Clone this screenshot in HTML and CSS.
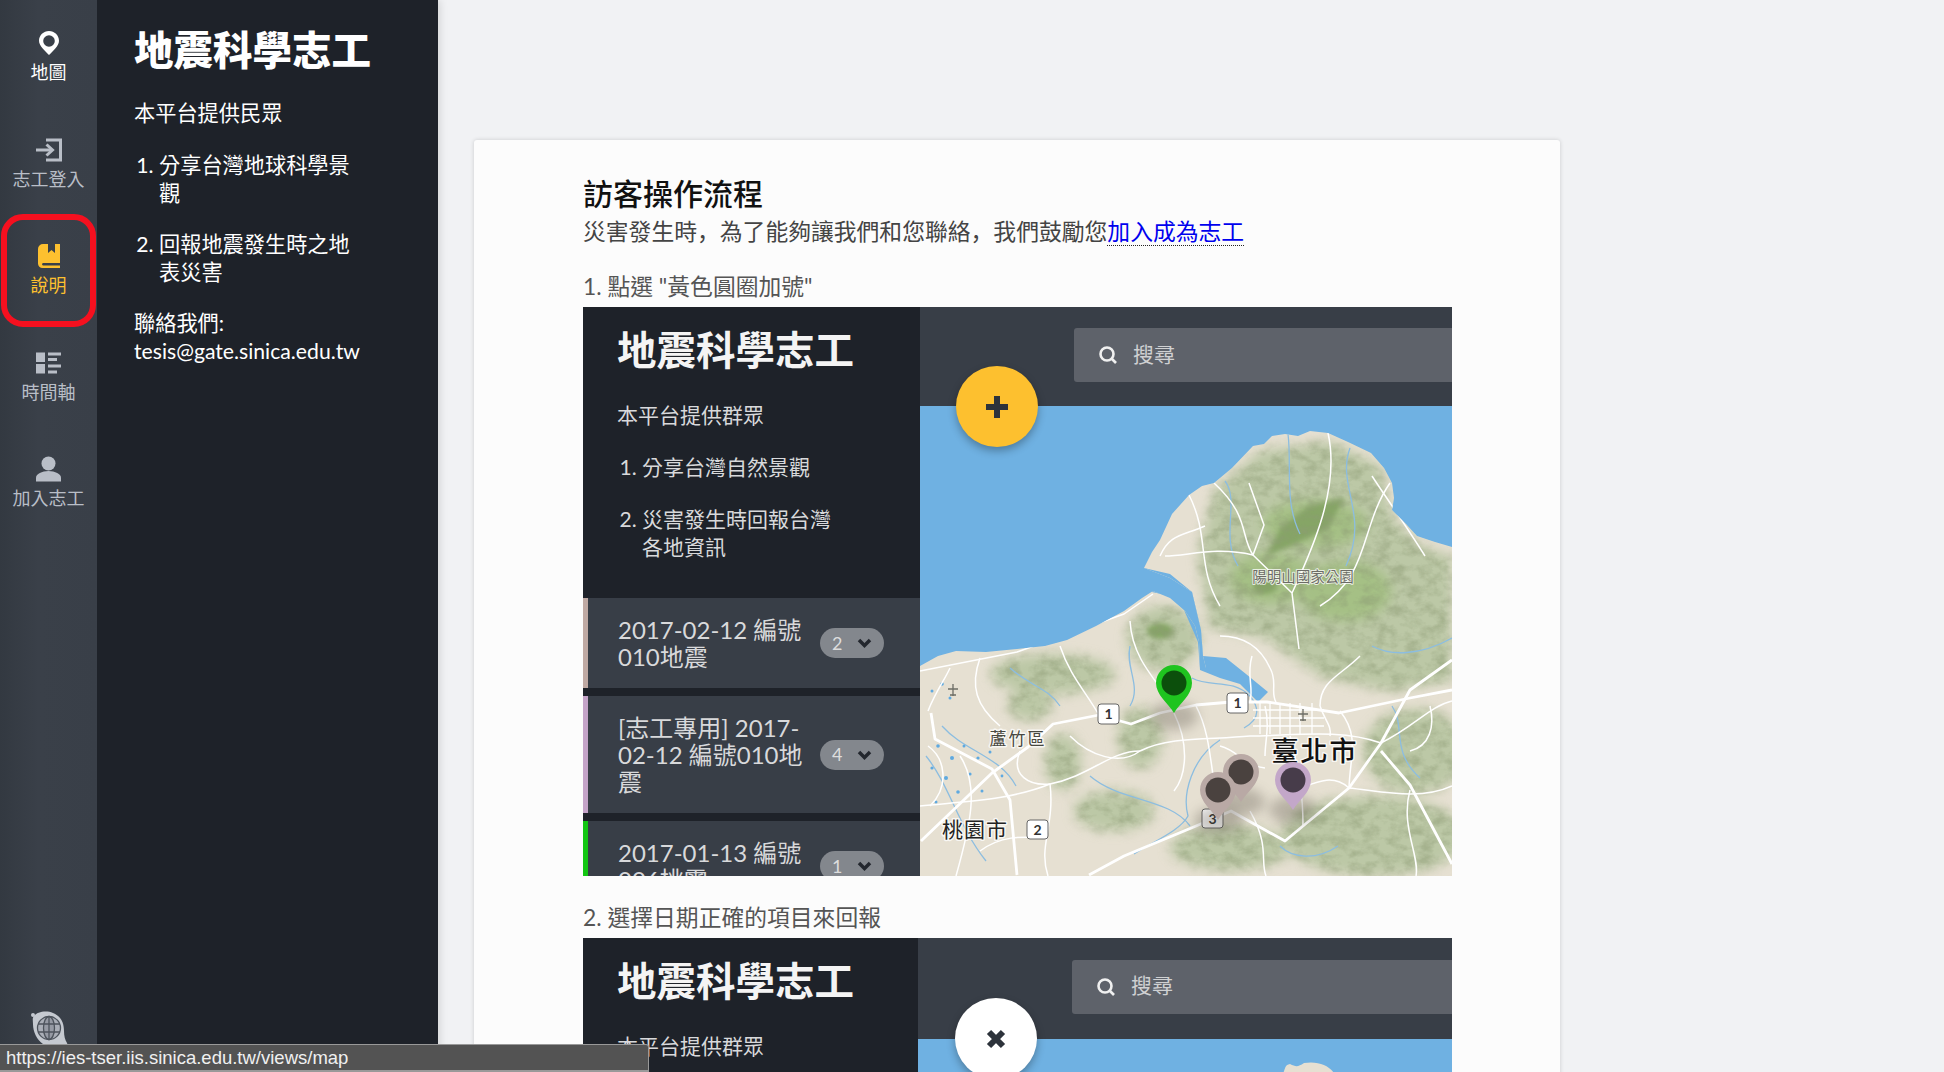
FILE: index.html
```html
<!DOCTYPE html>
<html lang="zh-Hant">
<head>
  <meta charset="UTF-8">
  <meta name="viewport" content="width=device-width, initial-scale=1.0">
  <title>地震科學志工</title>
  <link rel="stylesheet" href="styles.css">
</head>
<body>
  <nav class="rail">
    <a class="rail-item rail-item-first">
      <svg class="rail-icon" width="20" height="24" viewBox="0 0 20 24"><path fill-rule="evenodd" d="M10 0C4.5 0 0 4.3 0 9.8 0 15 6 20 10 24c4-4 10-9 10-14.2C20 4.3 15.500 0 10 0Zm0 4.200a5.800 5.800 0 1 1 0 11.600 5.800 5.800 0 0 1 0-11.600Z"/></svg>
      <span>地圖</span>
    </a>
    <a class="rail-item">
      <svg class="rail-icon rail-icon-line" width="26" height="23" viewBox="0 0 26 23"><path d="M10 1.500H24.500V21.500H10"/><path d="M0 11.500H15"/><path d="M10.500 6l6 5.500-6 5.500"/></svg>
      <span>志工登入</span>
    </a>
    <a class="rail-item rail-item-active">
      <svg class="rail-icon" width="22" height="24" viewBox="0 0 22 24"><path d="M5 0H10V9l3.500-3L17 9V0h5V19H5a1.300 1.300 0 0 0 0 2.500H22V24H4.500A4.500 4.500 0 0 1 0 19.500V5A5 5 0 0 1 5 0Z"/></svg>
      <span>說明</span>
    </a>
    <a class="rail-item">
      <svg class="rail-icon" width="25" height="21" viewBox="0 0 25 21"><rect width="9" height="9.500"/><rect y="11.500" width="9" height="9.500"/><rect x="12" width="13" height="3"/><rect x="12" y="5.500" width="9" height="3"/><rect x="12" y="12" width="13" height="3"/><rect x="12" y="18" width="9" height="3"/></svg>
      <span>時間軸</span>
    </a>
    <a class="rail-item">
      <svg class="rail-icon" width="25" height="25" viewBox="0 0 25 25"><circle cx="12.500" cy="7" r="7"/><path d="M0 25v-4c0-3.500 6-6.500 12.500-6.500S25 17.500 25 21v4Z"/></svg>
      <span>加入志工</span>
    </a>
    <svg class="rail-logo" width="38" height="40" viewBox="0 0 38 40">
      <path class="logo-blob" d="M4 6c3-4 12-6 19-3 8 3 11 10 11 18 0 5 1 9 3 12 2 4-3 6-6 3-5 2-13 2-18-2C7 30 3 22 3 14 3 11 2 8 4 6Z"/>
      <circle class="logo-blob" cx="3" cy="5" r="2"/>
      <g class="logo-globe">
        <circle cx="19" cy="18" r="11.500"/>
        <ellipse cx="19" cy="18" rx="5.500" ry="11.500"/>
        <path d="M19 6.500V29.500M8 14H30M8 22H30"/>
      </g>
    </svg>
  </nav>

  <aside class="panel">
    <h1>地震科學志工</h1>
    <p>本平台提供民眾</p>
    <ol>
      <li>分享台灣地球科學景觀</li>
      <li>回報地震發生時之地表災害</li>
    </ol>
    <p>聯絡我們:<br>tesis@gate.sinica.edu.tw</p>
  </aside>

  <main class="content">
    <article class="card">
      <h2>訪客操作流程</h2>
      <p class="lead" lang="zh-Hans">災害發生時&#65292;為了能夠讓我們和您聯絡&#65292;我們鼓勵您<a class="lead-link">加入成為志工</a></p>

      <p class="step">1. 點選 "黃色圓圈加號"</p>
      <div class="shot">
        <div class="shot-side">
          <h3>地震科學志工</h3>
          <p>本平台提供群眾</p>
          <ol>
            <li>分享台灣自然景觀</li>
            <li>災害發生時回報台灣各地資訊</li>
          </ol>
          <div class="event event-taupe">
            <div class="event-name">2017-02-12 編號010地震</div>
            <div class="event-badge">2<svg width="15" height="10" viewBox="0 0 15 10"><path d="M2 2l5.500 5.500L13 2"/></svg></div>
          </div>
          <div class="event event-purple">
            <div class="event-name">[志工專用] 2017-02-12 編號010地震</div>
            <div class="event-badge">4<svg width="15" height="10" viewBox="0 0 15 10"><path d="M2 2l5.500 5.500L13 2"/></svg></div>
          </div>
          <div class="event event-green">
            <div class="event-name">2017-01-13 編號006桃震</div>
            <div class="event-badge">1<svg width="15" height="10" viewBox="0 0 15 10"><path d="M2 2l5.500 5.500L13 2"/></svg></div>
          </div>
        </div>
        <div class="shot-main">
          <div class="shot-bar">
            <div class="search">
              <svg width="20" height="20" viewBox="0 0 20 20"><circle cx="9" cy="9" r="6.500"/><path d="M14 14l4 4"/></svg>
              <span>搜尋</span>
            </div>
          </div>
          <svg class="map" width="532" height="470" viewBox="0 0 532 470">
            <defs>
              <filter id="soft" x="-20%" y="-20%" width="140%" height="140%"><feGaussianBlur stdDeviation="6"/></filter>
              <filter id="softer" x="-20%" y="-20%" width="140%" height="140%"><feGaussianBlur stdDeviation="2.500"/></filter>
              <filter id="relief" x="0" y="0" width="100%" height="100%">
                <feTurbulence type="fractalNoise" baseFrequency="0.07 0.1" numOctaves="4" seed="6"/>
                <feColorMatrix values="0 0 0 0 0.27  0 0 0 0 0.33  0 0 0 0 0.18  2.400 0 0 0 -0.95"/>
              </filter>
              <clipPath id="land-clip"><path d="M0 260L18 250 36 245 66 246 97 243 125 240 147 234 176 220 204 205 222 192 233 185 250 192 265 205 275 220 279 236 280 262 286 262 283 250 281 224 272 186 250 172 224 162 232 146 240 134 252 108 269 89 282 80 294 77 312 62 333 40 344 38 352 30 365 28 378 30 390 25 408 27 428 36 451 47 464 62 472 77 474 92 472 104 486 118 497 130 515 136 532 141V470H0Z"/></clipPath>
              <g id="hills">
                <path d="M294 85L340 45 410 35 460 60 472 110 500 140 532 150V275L470 285 400 270 345 232 290 222 278 150Z"/>
                <ellipse cx="243" cy="232" rx="36" ry="32"/>
                <ellipse cx="133" cy="268" rx="62" ry="20"/>
                <ellipse cx="110" cy="298" rx="22" ry="16"/>
                <ellipse cx="143" cy="356" rx="18" ry="28"/>
                <ellipse cx="194" cy="405" rx="40" ry="20"/>
                <ellipse cx="495" cy="345" rx="52" ry="42"/>
                <ellipse cx="454" cy="430" rx="92" ry="40"/>
                <ellipse cx="310" cy="442" rx="60" ry="22"/>
                <ellipse cx="220" cy="332" rx="22" ry="30"/>
              </g>
              <mask id="hill-mask"><use href="#hills" class="mask-white" filter="url(#soft)"/></mask>
              <g id="pin-shape"><path d="M0 30C-6 20-18 12-18 0A18 18 0 1 1 18 0C18 12 6 20 0 30Z"/></g>
            </defs>
            <rect class="sea" width="532" height="470"/>
            <g clip-path="url(#land-clip)">
              <rect class="land" width="532" height="470"/>
              <use class="veg-light" href="#hills" filter="url(#soft)"/>
              <g filter="url(#soft)">
                <ellipse class="veg-mid" cx="395" cy="118" rx="52" ry="24"/>
                <ellipse class="veg-mid" cx="352" cy="172" rx="42" ry="26"/>
                <ellipse class="veg-mid" cx="425" cy="185" rx="46" ry="30"/>
              </g>
              <g filter="url(#softer)">
                <path class="veg-dark" d="M388 100L425 92 408 122 372 140 346 150 360 122Z"/>
                <ellipse class="veg-dark" cx="240" cy="225" rx="13" ry="8"/>
                <ellipse class="veg-dark" cx="345" cy="180" rx="12" ry="8"/>
              </g>
              <g mask="url(#hill-mask)">
                <rect class="relief" width="532" height="470" filter="url(#relief)"/>
              </g>
              <g class="water">
                <path d="M272 272C290 282 312 272 330 290 338 300 342 312 324 322"/>
                <path d="M300 334C272 352 262 388 268 410 260 425 232 436 214 448"/>
                <path d="M368 28C372 60 364 96 380 128"/>
                <path d="M430 42C416 80 450 108 426 160"/>
                <path d="M22 320C44 345 80 350 96 380"/>
                <path d="M6 350C30 380 38 420 66 455"/>
                <path d="M170 370C200 396 250 392 270 420"/>
                <path d="M360 440C372 452 396 455 418 440"/>
                <path d="M472 300C486 320 470 345 500 372"/>
                <path d="M305 75C320 95 300 130 318 160"/>
                <path d="M452 240C470 250 500 250 532 232"/>
                <path d="M210 240C205 262 222 280 210 300"/>
                <path d="M90 262C110 280 128 282 140 300"/>
              </g>
              <g class="ponds">
                <circle cx="22" cy="278" r="1.800"/><circle cx="12" cy="285" r="1.500"/><circle cx="30" cy="292" r="1.500"/>
                <circle cx="18" cy="340" r="1.800"/><circle cx="32" cy="352" r="2"/><circle cx="44" cy="340" r="1.500"/>
                <circle cx="12" cy="362" r="1.600"/><circle cx="26" cy="372" r="2"/><circle cx="50" cy="368" r="1.600"/>
                <circle cx="58" cy="352" r="1.600"/><circle cx="38" cy="386" r="1.800"/><circle cx="16" cy="396" r="1.500"/>
                <circle cx="70" cy="346" r="1.500"/><circle cx="62" cy="385" r="1.500"/><circle cx="82" cy="370" r="1.400"/>
              </g>
              <path class="river" d="M224 162L250 168 272 186 281 224 283 250 306 252 326 268 348 286 338 296 320 278 300 272 280 264 278 236 264 204 250 190 232 186Z"/>
              <g class="road road-thin">
                <path d="M0 265L97 246 204 208 233 188"/>
                <path d="M210 215C212 250 232 270 254 300"/>
                <path d="M140 240C150 270 166 286 179 309"/>
                <path d="M60 252C50 280 56 300 80 320"/>
                <path d="M329 77L344 119 333 149 372 187 379 243"/>
                <path d="M269 89C290 130 276 160 300 200"/>
                <path d="M294 77C330 110 320 130 333 149"/>
                <path d="M408 27C420 80 394 140 372 187"/>
                <path d="M470 77C440 120 450 170 400 200"/>
                <path d="M245 150C268 150 295 140 333 149"/>
                <path d="M300 230C322 230 340 240 350 262 358 276 350 286 356 296"/>
                <path d="M332 250C326 270 334 280 330 296"/>
                <path d="M254 307C270 340 266 370 254 385"/>
                <path d="M276 300C292 330 290 366 300 410"/>
                <path d="M220 345C250 330 290 334 330 330 370 330 420 322 461 337"/>
                <path d="M150 330C170 350 200 360 220 345"/>
                <path d="M0 400C50 395 90 394 130 378 170 370 190 345 220 345"/>
                <path d="M40 350C60 380 50 420 36 470"/>
                <path d="M130 378C135 420 118 440 128 470"/>
                <path d="M370 330C380 370 383 390 383 420"/>
                <path d="M429 382C410 365 390 380 373 385"/>
                <path d="M429 382C460 385 500 395 532 380"/>
                <path d="M461 337C495 320 510 300 532 295"/>
                <path d="M420 305C440 330 430 350 429 382"/>
                <path d="M330 405C350 440 340 455 346 470"/>
                <path d="M490 384C480 420 500 450 496 470"/>
                <path d="M240 150C250 128 262 130 285 120"/>
                <path d="M452 70C465 90 485 118 505 150"/>
                <path d="M30 262C24 275 16 285 8 305"/>
                <path d="M8 340C25 352 30 380 10 400"/>
                <path d="M100 345C90 370 110 380 130 378"/>
                <path d="M300 340C320 345 322 360 345 362"/>
                <path d="M345 300C350 320 345 335 345 350"/>
                <path d="M400 300C405 315 412 320 410 330"/>
                <path d="M510 300C515 320 510 340 490 345"/>
                <path d="M60 445C80 430 100 430 128 432"/>
                <path d="M440 250C420 270 400 275 400 300"/>
              </g>
              <g class="road road-grid">
                <path d="M333 304H404M333 312H404M333 320H404M340 297V328M350 297V328M360 297V328M370 297V328M380 297V328M392 297V328"/>
              </g>
              <g class="road road-wide">
                <path d="M1 435L72 367 108 341 133 318 179 309 211 318 240 307 276 299 311 296 347 296 419 307 490 292 532 284"/>
                <path d="M532 254L490 284 461 337 429 382 383 420 365 435 311 405 276 420 204 450 169 469"/>
                <path d="M461 345L490 379 532 458"/>
                <path d="M11 307L15 333 72 363 90 394 97 469"/>
              </g>
            </g>
            <g class="glyph-plane">
              <path d="M33 278V290M28 283H38M30 289H36"/>
              <path d="M383 303V315M378 308H388M380 314H386"/>
            </g>
            <text class="map-label map-label-park" x="383" y="176">陽明山國家公園</text>
            <text class="map-label map-label-mid" x="98" y="339">蘆竹區</text>
            <text class="map-label map-label-large" x="55" y="431">桃園市</text>
            <text class="map-label map-label-city" x="395" y="355">臺北市</text>
            <g class="shield">
              <rect x="178" y="298" width="21" height="20" rx="3"/><text x="188.500" y="313">1</text>
              <rect x="307" y="287" width="21" height="20" rx="3"/><text x="317.500" y="302">1</text>
              <rect x="107" y="414" width="21" height="19" rx="3"/><text x="117.500" y="429">2</text>
              <rect x="282" y="403" width="21" height="19" rx="3"/><text x="292.500" y="418">3</text>
            </g>
            <ellipse class="pin-glow" cx="254" cy="310" rx="24" ry="14"/>
            <ellipse class="pin-glow" cx="298" cy="415" rx="24" ry="14"/>
            <ellipse class="pin-glow" cx="321" cy="396" rx="24" ry="14"/>
            <ellipse class="pin-glow" cx="373" cy="404" rx="24" ry="14"/>
            <use class="pin-green" href="#pin-shape" x="254" y="277"/><circle class="pin-core-green" cx="254" cy="277" r="12.500"/>
            <use class="pin-taupe" href="#pin-shape" x="321" y="366"/><circle class="pin-core-taupe" cx="321" cy="366" r="12.500"/>
            <use class="pin-taupe" href="#pin-shape" x="298" y="384"/><circle class="pin-core-taupe" cx="298" cy="384" r="12.500"/>
            <use class="pin-purple" href="#pin-shape" x="373" y="374"/><circle class="pin-core-purple" cx="373" cy="374" r="12.500"/>
          </svg>
        </div>
        <div class="fab">
          <svg width="24" height="24" viewBox="0 0 24 24"><path d="M12 1V23M1 12H23"/></svg>
        </div>
      </div>

      <p class="step step-second">2. 選擇日期正確的項目來回報</p>
      <div class="shot shot-second">
        <div class="shot-side">
          <h3>地震科學志工</h3>
          <p>本平台提供群眾</p>
        </div>
        <div class="shot-main">
          <div class="shot-bar">
            <div class="search">
              <svg width="20" height="20" viewBox="0 0 20 20"><circle cx="9" cy="9" r="6.500"/><path d="M14 14l4 4"/></svg>
              <span>搜尋</span>
            </div>
          </div>
          <svg class="map" width="534" height="40" viewBox="0 0 534 40">
            <rect class="sea" width="534" height="40"/>
            <path class="land" d="M364 36C368 30 366 26 372 25 378 28 380 28 386 24 400 22 410 26 416 34L420 40H362Z"/>
          </svg>
        </div>
        <div class="fab fab-close">
          <svg width="22" height="22" viewBox="0 0 22 22"><path d="M4 4L18 18M18 4L4 18"/></svg>
        </div>
      </div>
    </article>
  </main>

  <div class="status">https://ies-tser.iis.sinica.edu.tw/views/map</div>
</body>
</html>
```

FILE: styles.css
```css
* {
  box-sizing: border-box;
}
html, body {
  height: 100%;
  margin: 0;
}
body {
  display: flex;
  overflow: hidden;
  font-family: Lato, "Noto Sans CJK TC", sans-serif;
  background-color: #f1f2f4;
  color: #333;
}
h1, h2, h3, p, ol {
  margin: 0;
  padding: 0;
}

/* icon rail */
.rail {
  position: relative;
  flex: 0 0 97px;
  background: linear-gradient(to right, #333941, #3a4049 40%, #393f48);
}
.rail-item {
  position: relative;
  display: flex;
  flex-direction: column;
  align-items: center;
  gap: 4px;
  height: 106.5px;
  padding-top: 29px;
  color: #b9bec7;
  font-size: 18px;
  line-height: 22px;
}
.rail-icon {
  height: 28px;
  fill: currentColor;
}
.rail-icon-line {
  fill: none;
  stroke: currentColor;
  stroke-width: 3;
}
.rail-item-first {
  color: #fff;
}
.rail-item-active {
  color: #fdc02f;
}
.rail-item-active::after {
  content: "";
  position: absolute;
  top: 1px;
  left: 1px;
  right: 1px;
  bottom: -7px;
  border: 6px solid #f5101f;
  border-radius: 22px;
}
.rail-logo {
  position: absolute;
  left: 30px;
  bottom: 22px;
}
.logo-blob {
  fill: #c5c9d0;
}
.logo-globe {
  fill: rgba(90, 96, 106, 0.25);
  stroke: #4d535c;
  stroke-width: 1.300;
}

/* text panel */
.panel {
  flex: 0 0 341px;
  padding: 26px 60px 0 37px;
  background-color: #1e2229;
  color: #fff;
  font-size: 21.200px;
  line-height: 28px;
  box-shadow: 2px 0 8px rgba(0, 0, 0, 0.12);
}
.panel h1 {
  margin-bottom: 25px;
  font-size: 39.500px;
  line-height: 48px;
  font-weight: 900;
  white-space: nowrap;
}
.panel ol {
  margin: 24px 10px 23px 0;
  padding-left: 25px;
}
.panel li + li {
  margin-top: 23px;
}

/* main column */
.content {
  flex: 1;
  padding: 140px 384px 0 36px;
  min-width: 0;
}
.card {
  padding: 34px 108px 40px 109px;
  background-color: #fcfcfc;
  border-radius: 3px;
  box-shadow: 0 0 4px rgba(0, 0, 0, 0.16);
}
.card h2 {
  font-size: 30px;
  line-height: 38px;
  font-weight: 500;
  color: #111;
}
.lead {
  font-family: Lato, "Noto Sans CJK SC", sans-serif;
  font-size: 22.800px;
  line-height: 38px;
  color: #444;
}
.lead-link {
  color: #0000ee;
  border-bottom: 1px dotted #222;
}
.step {
  margin-top: 19px;
  margin-bottom: 4px;
  font-size: 22.800px;
  line-height: 34px;
  color: #555;
}
.step-second {
  margin-top: 24px;
}

/* screenshots inside the card */
.shot {
  position: relative;
  display: flex;
  height: 569px;
  overflow: hidden;
  background-color: #1e2229;
}
.shot-side {
  flex: 0 0 337px;
  padding-top: 19px;
  background-color: #1e2229;
  color: #d8d9db;
  font-size: 21px;
  line-height: 28px;
}
.shot-second .shot-side {
  flex-basis: 335px;
}
.shot-side h3 {
  margin: 0 0 27px 34px;
  font-size: 39.500px;
  line-height: 48px;
  font-weight: 700;
  color: #f4f4f4;
  white-space: nowrap;
}
.shot-side p {
  margin-left: 34px;
}
.shot-side ol {
  margin: 24px 76px 37px 59px;
}
.shot-side li + li {
  margin-top: 24px;
}
.event {
  display: flex;
  align-items: center;
  gap: 6px;
  margin-bottom: 8px;
  padding: 18px 0 18px 30px;
  border-left: 5px solid;
  background-color: #383e47;
  font-size: 24px;
  line-height: 27px;
}
.event-taupe {
  border-color: #bfa9a3;
}
.event-purple {
  border-color: #c4a3c8;
}
.event-green {
  border-color: #13c613;
}
.event-name {
  width: 196px;
}
.event-badge {
  display: flex;
  align-items: center;
  justify-content: space-between;
  width: 64px;
  height: 30px;
  padding: 0 12px;
  border-radius: 15px;
  background-color: #83878d;
  font-size: 18px;
  color: #ddd;
}
.event-badge path {
  fill: none;
  stroke: #23272e;
  stroke-width: 3.500;
}
.shot-main {
  flex: 1;
  min-width: 0;
}
.shot-bar {
  display: flex;
  align-items: center;
  height: 99px;
  padding: 0 0 3px 154px;
  background-color: #383e47;
}
.shot-second .shot-bar {
  height: 101px;
  padding-bottom: 4px;
}
.search {
  display: flex;
  align-items: center;
  gap: 15px;
  width: 100%;
  height: 54px;
  padding-left: 24px;
  border-radius: 3px 0 0 3px;
  background-color: #5e626a;
  color: #cfd0d2;
  font-size: 21px;
}
.search span {
  padding-bottom: 5px;
}
.search svg {
  fill: none;
  stroke: #f0f0f0;
  stroke-width: 2.600;
}
.map {
  display: block;
}
.fab {
  position: absolute;
  left: 373px;
  top: 59px;
  display: flex;
  align-items: center;
  justify-content: center;
  width: 82px;
  height: 81px;
  border-radius: 50%;
  background-color: #fdc02f;
  box-shadow: 0 4px 8px rgba(0, 0, 0, 0.3);
}
.fab path {
  fill: none;
  stroke: #2d333b;
  stroke-width: 6;
}
.fab-close {
  left: 372px;
  top: 60px;
  background-color: #fff;
}

/* map drawing */
.sea {
  fill: #6fb1e2;
}
.land {
  fill: #e6e0d2;
}
.mask-white {
  fill: #fff;
}
.veg-light {
  fill: #bcc8a6;
}
.veg-mid {
  fill: #a5c085;
}
.veg-dark {
  fill: #86a566;
}
.relief {
  opacity: 0.5;
}
.water path {
  fill: none;
  stroke: #8cbde0;
  stroke-width: 1.300;
}
.ponds circle {
  fill: #5fa9e0;
}
.river {
  fill: #6fb1e2;
}
.road path {
  fill: none;
  stroke: #fff;
  stroke-linejoin: round;
}
.road-thin path {
  stroke-width: 1.500;
}
.road-grid path {
  stroke-width: 1.300;
}
.road-wide path {
  stroke-width: 2.800;
}
.glyph-plane path {
  fill: none;
  stroke: #6d6d66;
  stroke-width: 1.300;
}
.map-label {
  text-anchor: middle;
  paint-order: stroke;
  stroke: rgba(255, 255, 255, 0.75);
  stroke-width: 3px;
  stroke-linejoin: round;
  fill: #222;
}
.map-label-park {
  font-size: 14.500px;
  fill: #6c6c66;
  stroke-width: 2px;
}
.map-label-mid {
  font-size: 17px;
  letter-spacing: 2px;
  fill: #484840;
}
.map-label-large {
  font-size: 21px;
  letter-spacing: 1px;
}
.map-label-city {
  font-size: 27px;
  letter-spacing: 2px;
  font-weight: 500;
  fill: #111;
}
.shield rect {
  fill: #fff;
  stroke: #666;
  stroke-width: 1;
}
.shield text {
  font-size: 14px;
  font-weight: 700;
  text-anchor: middle;
  fill: #333;
}
.pin-glow {
  fill: rgba(70, 60, 50, 0.28);
  filter: blur(6px);
}
.pin-green {
  fill: #1fc41f;
}
.pin-core-green {
  fill: #0c4f0c;
}
.pin-taupe {
  fill: #b9a9a5;
}
.pin-core-taupe {
  fill: #4a423f;
}
.pin-purple {
  fill: #c3a7c9;
}
.pin-core-purple {
  fill: #473c4a;
}

/* browser link preview */
.status {
  position: fixed;
  left: 0;
  bottom: 0;
  width: 649px;
  height: 28px;
  padding-left: 6px;
  border: 1px solid #999;
  border-left: 0;
  border-bottom: 2px solid #999;
  border-radius: 0 3px 0 0;
  background-color: #535353;
  color: #f0f0f0;
  font-family: "Liberation Sans", Arial, sans-serif;
  font-size: 18.500px;
  line-height: 25px;
}
```
